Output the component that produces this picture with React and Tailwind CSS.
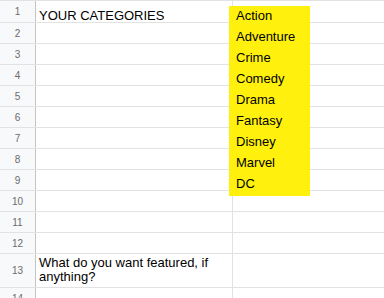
import React from 'react';

const rows = [
  { n: 1, a: 'YOUR CATEGORIES', b: 'Action' },
  { n: 2, a: '', b: 'Adventure' },
  { n: 3, a: '', b: 'Crime' },
  { n: 4, a: '', b: 'Comedy' },
  { n: 5, a: '', b: 'Drama' },
  { n: 6, a: '', b: 'Fantasy' },
  { n: 7, a: '', b: 'Disney' },
  { n: 8, a: '', b: 'Marvel' },
  { n: 9, a: '', b: 'DC' },
  { n: 10, a: '', b: '' },
  { n: 11, a: '', b: '' },
  { n: 12, a: '', b: '' },
  { n: 13, a: 'What do you want featured, if anything?', b: '', tall: true },
  { n: 14, a: '', b: '' },
];

function Row({ n, a, b, tall }) {
  // row 1 gets one extra pixel, row 13 holds wrapped text
  const h = tall ? 'h-[34px]' : n === 1 ? 'h-[22px]' : 'h-[21px]';
  const cell = tall ? 'pb-[3px] leading-[14px]' : 'pb-0 leading-[13px]';
  return (
    <div className={`flex ${h} border-b border-[#e2e2e2] shrink-0`}>
      <div className="w-[36px] shrink-0 flex items-center justify-center border-r border-[#c4c4c4] bg-[#f8f9fa] text-[10px] text-[#6b6b6b]">
        {n}
      </div>
      <div className={`w-[197px] shrink-0 border-r border-[#e2e2e2] flex items-end px-[3px] ${cell}`}>
        <span className="relative z-10 text-[13px] text-black">{a}</span>
      </div>
      <div className={`flex-1 flex items-end px-[3px] ${cell}`}>
        <span className="relative z-10 text-[13px] text-black">{b}</span>
      </div>
    </div>
  );
}

export default function App() {
  return (
    <div
      className="relative w-[384px] h-[298px] overflow-hidden bg-white border-t border-[#e2e2e2] flex flex-col"
      style={{ fontFamily: '"Liberation Sans", Arial, sans-serif' }}
    >
      {/* highlighted category block */}
      <div className="absolute left-[229px] top-[5px] w-[81px] h-[190px] bg-[#fff000]/95 z-0" />
      {rows.map((r) => (
        <Row key={r.n} {...r} />
      ))}
    </div>
  );
}
